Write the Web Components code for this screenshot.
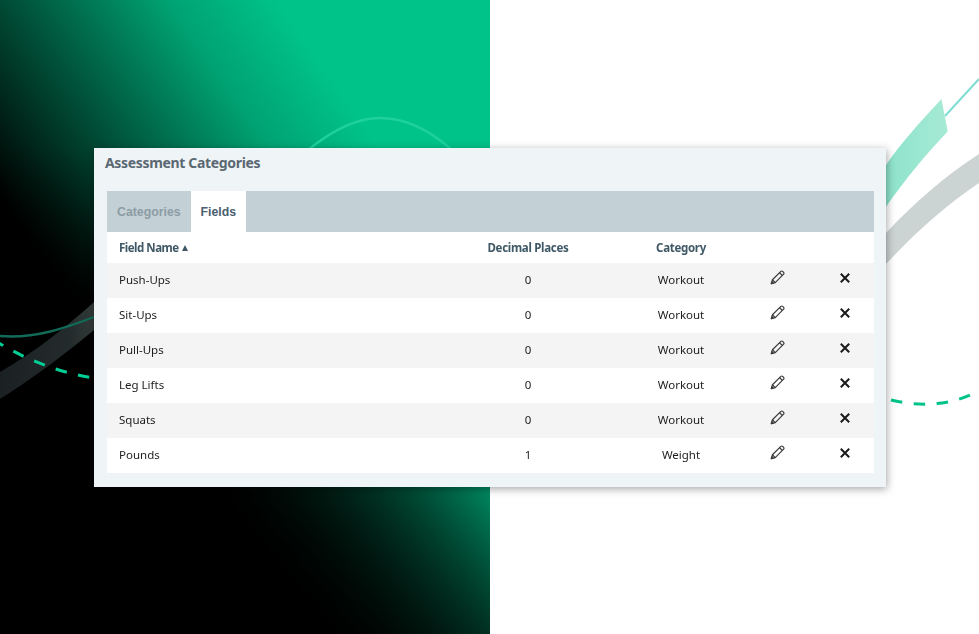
<!DOCTYPE html>
<html lang="en"><head><meta charset="utf-8"><title>Assessment Categories</title>
<style>
html,body{margin:0;padding:0;background:#fff}
body{width:979px;height:634px;overflow:hidden;font-family:"Noto Sans","Open Sans",sans-serif}
</style></head><body>
<x-stage>
  <x-backdrop slot="backdrop"></x-backdrop>
  <x-card heading="Assessment Categories">
    <x-tabs><x-tab>Categories</x-tab><x-tab active>Fields</x-tab></x-tabs>
    <x-row head><span>Field Name <x-sort></x-sort></span><span>Decimal Places</span><span>Category</span></x-row>
    <x-row><span>Push-Ups</span><span>0</span><span>Workout</span><x-edit slot="edit"></x-edit><x-del slot="del"></x-del></x-row>
    <x-row><span>Sit-Ups</span><span>0</span><span>Workout</span><x-edit slot="edit"></x-edit><x-del slot="del"></x-del></x-row>
    <x-row><span>Pull-Ups</span><span>0</span><span>Workout</span><x-edit slot="edit"></x-edit><x-del slot="del"></x-del></x-row>
    <x-row><span>Leg Lifts</span><span>0</span><span>Workout</span><x-edit slot="edit"></x-edit><x-del slot="del"></x-del></x-row>
    <x-row><span>Squats</span><span>0</span><span>Workout</span><x-edit slot="edit"></x-edit><x-del slot="del"></x-del></x-row>
    <x-row><span>Pounds</span><span>1</span><span>Weight</span><x-edit slot="edit"></x-edit><x-del slot="del"></x-del></x-row>
  </x-card>
</x-stage>
<script>
function def(name, html){
  customElements.define(name, class extends HTMLElement{
    constructor(){super();const s=this.attachShadow({mode:'open'});s.innerHTML=typeof html==='function'?html(this):html;}
  });
}
def('x-stage',`<style>
:host{display:block;position:relative;width:979px;height:634px;overflow:hidden;box-sizing:border-box;padding:148px 93px 0 94px}
</style><slot name="backdrop"></slot><slot></slot>`);
def('x-backdrop',`<style>
:host{display:block;position:absolute;inset:0;background:#fff}
.dark{position:absolute;left:0;top:0;width:490px;height:634px;background:linear-gradient(55deg,#000 249px,rgb(0,162,114) 500px,#00c389 590px)}
.dark::after{content:"";position:absolute;inset:0;background:linear-gradient(227deg,rgba(0,0,0,0) 310px,#000 554px);-webkit-mask-image:linear-gradient(180deg,transparent 150px,#000 300px);mask-image:linear-gradient(180deg,transparent 150px,#000 300px)}
svg{position:absolute;left:0;top:0}
</style><div class="dark"></div>
<svg width="979" height="634" viewBox="0 0 979 634" fill="none">
<defs>
<linearGradient id="t" x1="886" x2="948" y1="0" y2="0" gradientUnits="userSpaceOnUse"><stop offset="0" stop-color="#8ee3cb"/><stop offset="1" stop-color="#a6ead5"/></linearGradient>
<linearGradient id="g" x1="0" x2="94" y1="0" y2="0" gradientUnits="userSpaceOnUse"><stop offset="0" stop-color="#1b2123"/><stop offset=".75" stop-color="#242b2c"/><stop offset="1" stop-color="#323b39"/></linearGradient>
</defs>
<path d="M308 150C340 124 365 118 380 118C400 118 425 126 452 150" stroke="#1ed19e" stroke-width="2.4"/>
<path d="M0 399L0 372C35 352 65 328 94 302L94 330C60 358 30 380 0 399Z" fill="url(#g)"/>
<path d="M0 336C35 339 65 328 94 317" stroke="#126b58" stroke-width="2.4"/>
<path d="M-9 338C20 357 55 372 94 378" stroke="#00cf95" stroke-width="3" stroke-dasharray="11.5 11.5" stroke-dashoffset="-3"/>
<path d="M886 233C915 202 945 176 979 154L979 183C945 206 915 233 886 264Z" fill="#ccd3d3"/>
<path d="M886 165C900 144 922 120 941.5 99L947.7 131.5C925 155 905 180 886 206.7Z" fill="url(#t)"/>
<path d="M945 116L979 79" stroke="#7fdcd2" stroke-width="2"/>
<path d="M891 400C920 407 950 406 979 391" stroke="#00c389" stroke-width="3" stroke-dasharray="11.5 11.5"/>
</svg>`);
def('x-card',h=>`<style>
:host{display:block;position:relative;box-sizing:border-box;width:792px;height:339px;padding:5px 12px 0 13px;background:#eff4f7;box-shadow:1px 2px 8px rgba(0,0,0,.35)}
h2{margin:0 0 0 -2px;height:38px;font:700 14px/20px "Noto Sans",sans-serif;letter-spacing:-.33px;color:#5a6872}
</style><h2>${h.getAttribute('heading')}</h2><slot></slot>`);
def('x-tabs',`<style>
:host{display:flex;height:41px;background:#c3d0d6}
</style><slot></slot>`);
def('x-tab',`<style>
:host{display:flex;align-items:center;padding:0 10px;font:700 12.3px "Liberation Sans",sans-serif;color:#8c9ca4}
:host([active]){background:#fff;color:#4a6070}
</style><slot></slot>`);
def('x-row',`<style>
:host{display:grid;grid-template-columns:325px 192px 114px 78px 58px;height:35px;box-sizing:border-box;padding-bottom:2px;align-items:center;background:#fff;font:400 11.5px "Noto Sans",sans-serif;color:#1c1c1c;will-change:transform}
:host(:nth-of-type(even)){background:#f4f4f4}
:host([head]){height:31px;padding-bottom:0;font-weight:700;letter-spacing:-.3px;color:#3f5866}
:host([head]) ::slotted(span:first-child){letter-spacing:-.5px}
::slotted(span){text-align:center}
::slotted(span:first-child){text-align:left;padding-left:12px}
.c{display:flex;justify-content:center;align-items:center}
</style><slot></slot><div class="c"><slot name="edit"></slot></div><div class="c"><slot name="del"></slot></div>`);
def('x-sort',`<style>
:host{display:inline-block;width:0;height:0;border-left:3.5px solid transparent;border-right:3.5px solid transparent;border-bottom:6px solid #3f5866;margin-left:1px;vertical-align:1px}
</style>`);
def('x-edit',`<style>:host{display:block;width:15px;height:15px;margin-top:-4px}svg{display:block}</style>
<svg width="15" height="15" viewBox="0 0 16 16" fill="none" stroke="#3c3c3c" stroke-width="1.3" stroke-linejoin="round"><path d="M1.4 14.6L2.6 10.4L11.6 1.5C12.2 .9 12.9 .9 13.5 1.5L14.5 2.5C15.1 3.1 15.1 3.8 14.5 4.4L5.6 13.4Z"/><path d="M10.2 2.9L13.1 5.8M2.6 10.4L5.6 13.4"/><path d="M1.4 14.6L2 12.5L3.5 14Z" fill="#3c3c3c"/></svg>`);
def('x-del',`<style>:host{display:block;width:10px;height:10px;margin-top:-3px}svg{display:block}</style>
<svg width="10" height="10" viewBox="0 0 10 10" stroke="#1a1a1a" stroke-width="2"><path d="M.8 .8L9.2 9.2M9.2 .8L.8 9.2"/></svg>`);
</script>
</body></html>
